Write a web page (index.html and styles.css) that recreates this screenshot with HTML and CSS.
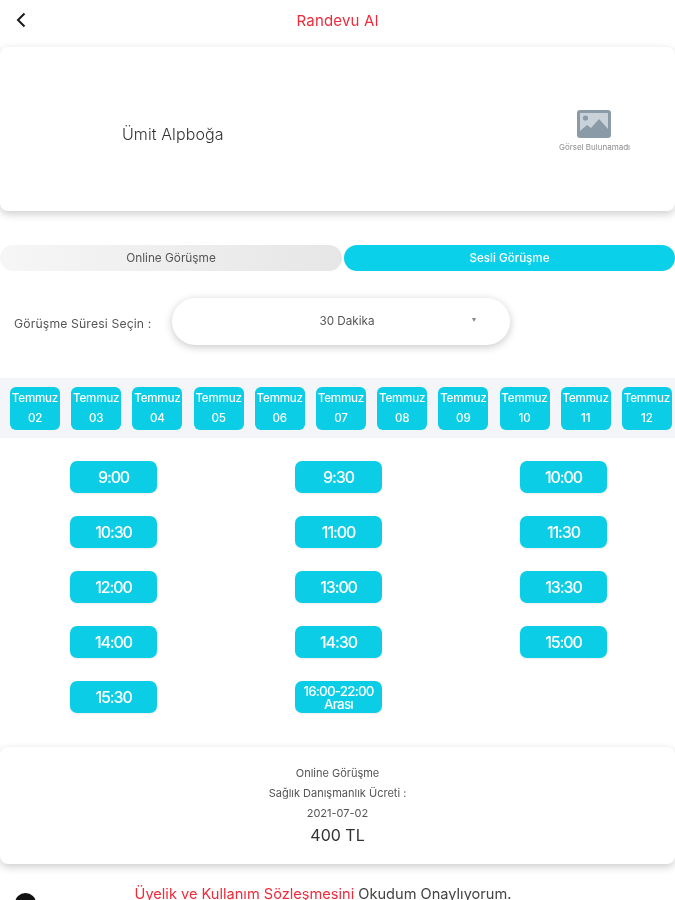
FILE: index.html
```html
<!DOCTYPE html>
<html lang="tr">
<head>
<meta charset="utf-8">
<title>Randevu Al</title>
<link rel="stylesheet" href="styles.css">
</head>
<body>
<div class="page">
  <header class="topbar">
    <svg class="back" width="12" height="18" viewBox="0 0 12 18"><path d="M9.5 2.5 L3 9 L9.5 15.5" fill="none" stroke="#1a1a1a" stroke-width="2"/></svg>
    <h1 class="title">Randevu Al</h1>
  </header>

  <section class="doctor">
    <div class="doctor-name">Ümit Alpboğa</div>
    <div class="noimg">
      <svg width="34" height="28" viewBox="0 0 34 28"><rect width="34" height="28" rx="3" fill="#8a9aa6"/><rect x="3" y="3" width="28" height="22" fill="#c9d2d9"/><circle cx="8.5" cy="8" r="2.6" fill="#8a9aa6"/><path d="M3 25 L3 21 L10 15 L14 18 L22 9 L31 19 L31 25 Z" fill="#8a9aa6"/></svg>
      <span class="noimg-text">Görsel Bulunamadı</span>
    </div>
  </section>

  <div class="tabs">
    <div class="tab tab-off">Online Görüşme</div>
    <div class="tab tab-on">Sesli Görüşme</div>
  </div>

  <div class="duration">
    <span class="duration-label">Görüşme Süresi Seçin :</span>
    <div class="select"><span>30 Dakika</span><i class="caret"></i></div>
  </div>

  <div class="dates">
    <div class="chip"><span>Temmuz</span><span>02</span></div>
    <div class="chip"><span>Temmuz</span><span>03</span></div>
    <div class="chip"><span>Temmuz</span><span>04</span></div>
    <div class="chip"><span>Temmuz</span><span>05</span></div>
    <div class="chip"><span>Temmuz</span><span>06</span></div>
    <div class="chip"><span>Temmuz</span><span>07</span></div>
    <div class="chip"><span>Temmuz</span><span>08</span></div>
    <div class="chip"><span>Temmuz</span><span>09</span></div>
    <div class="chip"><span>Temmuz</span><span>10</span></div>
    <div class="chip"><span>Temmuz</span><span>11</span></div>
    <div class="chip"><span>Temmuz</span><span>12</span></div>
  </div>

  <div class="slots">
    <div class="slot">9:00</div><div class="slot">9:30</div><div class="slot">10:00</div>
    <div class="slot">10:30</div><div class="slot">11:00</div><div class="slot">11:30</div>
    <div class="slot">12:00</div><div class="slot">13:00</div><div class="slot">13:30</div>
    <div class="slot">14:00</div><div class="slot">14:30</div><div class="slot">15:00</div>
    <div class="slot">15:30</div><div class="slot slot-small">16:00-22:00 Arası</div>
  </div>

  <section class="summary">
    <p class="sum-line">Online Görüşme</p>
    <p class="sum-line">Sağlık Danışmanlık Ücreti :</p>
    <p class="sum-line">2021-07-02</p>
    <p class="sum-price">400 TL</p>
  </section>

  <div class="agree">
    <span class="radio"></span>
    <p class="agree-text"><span class="red">Üyelik ve Kullanım Sözleşmesini</span> Okudum Onaylıyorum.</p>
  </div>
</div>
</body>
</html>
```

FILE: styles.css
```css
* { box-sizing: border-box; }
html, body { margin: 0; padding: 0; background: #fff; }
body { height: 900px; overflow: hidden; font-family: Inter, "Noto Sans", sans-serif; color: #333; }
.page { width: 675px; height: 900px; overflow: hidden; filter: blur(0.45px); }

.topbar { height: 47px; display: flex; align-items: center; justify-content: center; position: relative; padding-bottom: 7px; }
.back { position: absolute; left: 15px; top: 11px; }
.title { margin: 0; font-size: 15px; font-weight: 400; color: #ee2b3b; letter-spacing: 0.2px; }

.doctor { height: 164px; border-radius: 8px; background: #fff; box-shadow: 0 3px 9px rgba(0,0,0,.2); display: flex; align-items: center; justify-content: space-between; padding: 0 45px 0 122px; }
.doctor-name { font-size: 16px; font-weight: 300; color: #333; padding-top: 10px; letter-spacing: 0.1px; }
.noimg { display: flex; flex-direction: column; align-items: center; gap: 4px; padding-top: 4px; }
.noimg-text { font-size: 8px; color: #8d8d8d; }

.tabs { display: flex; gap: 2px; margin-top: 34px; height: 26px; }
.tab { border-radius: 13px; display: flex; align-items: center; justify-content: center; font-size: 11.8px; font-weight: 400; }
.tab-off { background: linear-gradient(90deg, #f6f6f7, #e6e6e7); color: #555; width: 342px; }
.tab-on { background: #0bd0ea; color: #fff; width: 331px; font-weight: 500; font-size: 11.6px; }

.duration { display: flex; align-items: center; margin-top: 27px; height: 47px; padding-left: 14px; }
.duration-label { width: 158px; flex: none; font-size: 12.2px; color: #555; padding-top: 3px; letter-spacing: 0.15px; }
.select { width: 338px; height: 47px; border-radius: 24px; background: #fff; box-shadow: 0 2px 8px rgba(0,0,0,.22); display: flex; align-items: center; justify-content: center; font-size: 11.7px; color: #555; position: relative; padding: 0 0 2px 12px; }
.caret { position: absolute; left: 300px; top: 20px; border-left: 2.5px solid transparent; border-right: 2.5px solid transparent; border-top: 4px solid #888; }

.dates { margin-top: 33px; height: 60px; background: #f3f5f9; display: flex; align-items: center; justify-content: space-between; padding: 0 3px 0 10px; overflow: hidden; }
.chip { width: 50px; height: 43px; flex: none; border-radius: 6px; background: #0bcde6; color: #fff; display: flex; flex-direction: column; align-items: center; justify-content: center; gap: 7px; font-size: 11.6px; line-height: 13px; font-weight: 500; letter-spacing: -0.2px; }

.slots { display: grid; grid-template-columns: repeat(3, 225px); row-gap: 23px; padding-top: 23px; padding-left: 1px; }
.slot { width: 87px; height: 32px; justify-self: center; border-radius: 7px; background: #0bcde6; color: #fff; display: flex; align-items: center; justify-content: center; text-align: center; font-size: 16px; font-weight: 500; letter-spacing: -1.1px; box-shadow: 0 1px 2px rgba(0,0,0,.08); }
.slot-small { font-size: 13.4px; line-height: 13px; letter-spacing: -0.8px; padding-top: 1px; }

.summary { margin-top: 34px; height: 117px; border-radius: 8px; background: #fff; box-shadow: 0 3px 9px rgba(0,0,0,.2); display: flex; flex-direction: column; align-items: center; padding-top: 16px; }
.sum-line { margin: 0; height: 20px; line-height: 20px; font-size: 11px; color: #555; }
.sum-price { margin: 1px 0 0; font-size: 16px; line-height: 22px; color: #333; }

.agree { position: relative; margin-top: 22px; text-align: center; padding-right: 29px; }
.radio { position: absolute; left: 15px; top: 7px; width: 21px; height: 21px; border-radius: 50%; background: #111; }
.agree-text { margin: 0; font-size: 14.6px; line-height: 16px; color: #444; white-space: nowrap; }
.red { color: #ee2b3b; }
```
